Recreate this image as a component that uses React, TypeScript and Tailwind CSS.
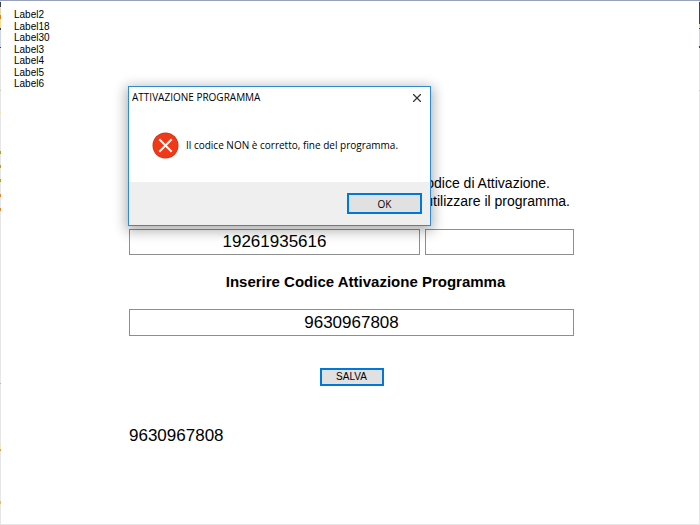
import { X } from "lucide-react";

const labels = ["Label2", "Label18", "Label30", "Label3", "Label4", "Label5", "Label6"];

// slivers of the windows that sit behind the form
const leftEdge = [
  { top: 1, height: 5, color: "#3a4256" },
  { top: 6, height: 8, color: "#e9d9a8" },
  { top: 14, height: 4, color: "#d9822b" },
  { top: 18, height: 9, color: "#f6dd93" },
  { top: 27, height: 2, color: "#3a4256" },
  { top: 29, height: 17, color: "#cfd6e6" },
  { top: 46, height: 1, color: "#3a4256" },
  { top: 89, height: 1, color: "#c4c4c4" },
  { top: 111, height: 2, color: "#f6e3a0" },
  { top: 150, height: 3, color: "#b5a51e" },
  { top: 164, height: 3, color: "#b5a51e" },
  { top: 178, height: 3, color: "#b5a51e" },
  { top: 193, height: 3, color: "#dd8a3c" },
  { top: 207, height: 3, color: "#dd8a3c" },
  { top: 382, height: 1, color: "#b8b8b8" },
  { top: 444, height: 2, color: "#f6e3a0" },
  { top: 448, height: 2, color: "#f0a23c" },
  { top: 500, height: 3, color: "#f3bd4c" },
];

const rightEdge = [
  { top: 1, height: 22, color: "#3a4256" },
  { top: 23, height: 4, color: "#ecd49a" },
  { top: 27, height: 1, color: "#3a4256" },
  { top: 28, height: 17, color: "#d0d4de" },
  { top: 45, height: 2, color: "#3a4256" },
  { top: 89, height: 1, color: "#c4c4c4" },
];

function Edge({ marks }: { marks: { top: number; height: number; color: string }[] }) {
  return (
    <div className="relative bg-[#e6e6e6]">
      {marks.map((m) => (
        <span
          key={m.top}
          className="absolute left-0 w-px"
          style={{ top: m.top, height: m.height, backgroundColor: m.color }}
        />
      ))}
    </div>
  );
}

function MessageBox() {
  return (
    <div
      role="alertdialog"
      aria-labelledby="msg-title"
      aria-describedby="msg-text"
      className="absolute left-[127px] top-[85px] flex h-[140px] w-[303px] flex-col border border-[#2f8ad2] bg-white font-['Open_Sans','Noto_Sans',sans-serif] text-[10px] text-black shadow-[0_3px_12px_2px_rgba(0,0,0,0.32)]"
    >
      <div className="flex h-[21px] items-center justify-between pl-[3px] pr-[6px]">
        <h1 id="msg-title">ATTIVAZIONE PROGRAMMA</h1>
        <button type="button" aria-label="Chiudi">
          <X size={14} strokeWidth={2} className="text-[#333]" />
        </button>
      </div>
      <div className="flex flex-1 items-center gap-[7px] pl-[23px]">
        <svg width="27" height="27" viewBox="0 0 27 27" aria-hidden="true">
          <circle cx="13.5" cy="13.5" r="13" fill="#c9341a" />
          <circle cx="13.5" cy="13.5" r="12.2" fill="#f03a17" />
          <path d="M7.3 7.3l12.4 12.4M19.7 7.3l-12.4 12.4" stroke="#fff" strokeWidth="2" />
        </svg>
        <p id="msg-text">Il codice NON è corretto, fine del programma.</p>
      </div>
      <div className="flex h-[43px] items-center justify-end bg-[#efefef] pr-2">
        <button
          type="button"
          className="h-[21px] w-[75px] border-2 border-[#0078d7] bg-[#e1e1e1] leading-none"
        >
          OK
        </button>
      </div>
    </div>
  );
}

export default function App() {
  return (
    <div className="grid min-h-screen grid-cols-[1px_1fr_1px] border-t border-[#98a2bd] bg-white font-['Liberation_Sans',Arial,sans-serif] text-black">
      <Edge marks={leftEdge} />
      <main className="relative border-b border-[#e6e6e6] pt-2">
        <ul className="flex h-20 flex-col justify-between pl-[13px] text-[10px] leading-[11px]">
          {labels.map((l) => (
            <li key={l}>{l}</li>
          ))}
        </ul>
        <form className="pl-32 pr-[125px] pt-[85px]" onSubmit={(e) => e.preventDefault()}>
          <div className="text-right text-[14px] leading-[18px]">
            <p className="pr-6">Codice di Attivazione.</p>
            <p className="pr-1">utilizzare il programma.</p>
          </div>
          <div className="mt-[19px] grid grid-cols-[291fr_149fr] gap-[5px]">
            <input
              aria-label="Codice programma"
              defaultValue="19261935616"
              className="h-[26px] w-full min-w-0 border border-[#8e8e8e] text-center text-[17px]"
            />
            <input
              aria-label="Codice aggiuntivo"
              className="h-[26px] w-full min-w-0 border border-[#8e8e8e] text-center text-[17px]"
            />
          </div>
          <label htmlFor="codice" className="mt-[17px] block pl-7 text-center text-[15px] font-bold leading-[20px]">
            Inserire Codice Attivazione Programma
          </label>
          <input
            id="codice"
            defaultValue="9630967808"
            className="mt-[17px] block h-[27px] w-full border border-[#8e8e8e] text-center text-[17px]"
          />
          <button
            type="submit"
            className="mx-auto mt-8 block h-[18px] w-16 border-2 border-[#0078d7] bg-[#e1e1e1] text-[10px] leading-none"
          >
            SALVA
          </button>
          <output htmlFor="codice" className="mt-10 block text-[17px] leading-[20px]">
            9630967808
          </output>
        </form>
        <MessageBox />
      </main>
      <Edge marks={rightEdge} />
    </div>
  );
}
